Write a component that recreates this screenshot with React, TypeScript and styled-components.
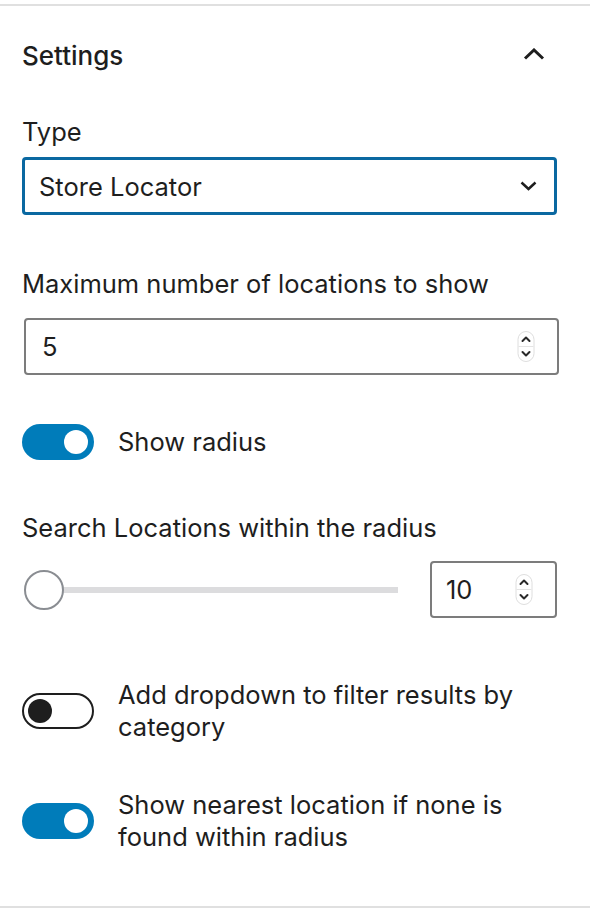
import React from "react";
import styled, { createGlobalStyle } from "styled-components";

const Global = createGlobalStyle`
  html, body { margin: 0; padding: 0; background: #fff; }
  body {
    font-family: Inter, "Noto Sans", "Liberation Sans", sans-serif;
    color: #1e1e1e;
    -webkit-font-smoothing: antialiased;
  }
  * { box-sizing: border-box; }
`;

const Page = styled.div`
  width: 590px;
  height: 910px;
  padding-top: 4px;
  background: #fff;
`;

const Panel = styled.section`
  border-top: 2px solid #e0e0e0;
  border-bottom: 2px solid #e0e0e0;
  padding: 0 33px 53px 22px;
`;

const Header = styled.div`
  height: 100px;
  display: flex;
  align-items: center;
  justify-content: space-between;
`;

const Title = styled.h2`
  margin: 0;
  font-size: 26px;
  line-height: 32px;
  font-weight: 500;
  color: #1e1e1e;
`;

const HeaderIcon = styled.svg`
  width: 22px;
  height: 12px;
  margin-right: 12px;
  margin-top: -4px;
`;

const Block = styled.div<{ $mt: number }>`
  margin-top: ${(p) => p.$mt}px;
`;

const Label = styled.div`
  font-size: 25.5px;
  line-height: 32px;
  color: #1e1e1e;
`;

const Select = styled.div`
  margin-top: 9px;
  height: 58px;
  border: 3px solid #0a68a1;
  border-radius: 4px;
  display: flex;
  align-items: center;
  justify-content: space-between;
  padding: 0 17px 0 14px;
  font-size: 25.5px;
`;

const NumberBox = styled.div<{ $width?: number }>`
  height: 57px;
  width: ${(p) => (p.$width ? `${p.$width}px` : "auto")};
  border: 2px solid #7c7c7c;
  border-radius: 4px;
  display: flex;
  align-items: center;
  justify-content: space-between;
  padding: 0 22px 0 14px;
  font-size: 25.5px;
  flex-shrink: 0;
`;

const WideNumber = styled(NumberBox)`
  margin: 18px -2px 0 2px;
  padding-left: 16px;
`;

const Spinner = styled.svg`
  width: 18px;
  height: 31px;
  display: block;
`;

const ToggleRow = styled.div`
  display: flex;
  align-items: center;
  gap: 24px;
`;

const Track = styled.div<{ $on: boolean }>`
  width: 72px;
  height: 36px;
  border-radius: 18px;
  flex-shrink: 0;
  display: flex;
  align-items: center;
  justify-content: ${(p) => (p.$on ? "flex-end" : "flex-start")};
  padding: ${(p) => (p.$on ? "0 6px" : "0 4px")};
  background: ${(p) => (p.$on ? "#007cba" : "#fff")};
  border: ${(p) => (p.$on ? "none" : "2px solid #1e1e1e")};
`;

const Knob = styled.div<{ $on: boolean }>`
  width: 24px;
  height: 24px;
  border-radius: 50%;
  background: ${(p) => (p.$on ? "#fff" : "#1e1e1e")};
`;

const ToggleText = styled.div`
  font-size: 25.5px;
  line-height: 32px;
  color: #1e1e1e;
`;

const RangeRow = styled.div`
  margin-top: 17px;
  display: flex;
  align-items: center;
  gap: 32px;
`;

const Range = styled.div`
  flex: 1;
  height: 40px;
  position: relative;
  display: flex;
  align-items: center;
`;

const RangeTrack = styled.div`
  margin-left: 22px;
  flex: 1;
  height: 6px;
  background: #dcdcde;
`;

const Thumb = styled.div`
  position: absolute;
  left: 2px;
  top: 0;
  width: 40px;
  height: 40px;
  border-radius: 50%;
  border: 2px solid #8a8d92;
  background: #fff;
`;

const SpinnerIcon = () => (
  <Spinner viewBox="0 0 18 31">
    <rect x="1" y="0.5" width="16" height="30" rx="8" fill="#fff" stroke="#dedede" />
    <line x1="1.5" y1="15.5" x2="16.5" y2="15.5" stroke="#e4e4e4" />
    <path d="M5.5 10 L9 6.5 L12.5 10" fill="none" stroke="#2a2a2a" strokeWidth="2" strokeLinecap="round" strokeLinejoin="round" />
    <path d="M5.5 21 L9 24.5 L12.5 21" fill="none" stroke="#2a2a2a" strokeWidth="2" strokeLinecap="round" strokeLinejoin="round" />
  </Spinner>
);

const Toggle = ({ on }: { on: boolean }) => (
  <Track $on={on}>
    <Knob $on={on} />
  </Track>
);

export default function App() {
  return (
    <>
      <Global />
      <Page>
        <Panel>
          <Header>
            <Title>Settings</Title>
            <HeaderIcon viewBox="0 0 22 12">
              <path d="M2 10.5 L11 2 L20 10.5" fill="none" stroke="#1e1e1e" strokeWidth="3" />
            </HeaderIcon>
          </Header>

          <Block $mt={10}>
            <Label>Type</Label>
            <Select>
              <span>Store Locator</span>
              <svg width="17" height="10" viewBox="0 0 17 10">
                <path d="M1.5 1.5 L8.5 8 L15.5 1.5" fill="none" stroke="#1e1e1e" strokeWidth="2.5" />
              </svg>
            </Select>
          </Block>

          <Block $mt={53}>
            <Label>Maximum number of locations to show</Label>
            <WideNumber>
              <span>5</span>
              <SpinnerIcon />
            </WideNumber>
          </Block>

          <Block $mt={49}>
            <ToggleRow>
              <Toggle on />
              <ToggleText>Show radius</ToggleText>
            </ToggleRow>
          </Block>

          <Block $mt={52}>
            <Label>Search Locations within the radius</Label>
            <RangeRow>
              <Range>
                <Thumb />
                <RangeTrack />
              </Range>
              <NumberBox $width={127}>
                <span>10</span>
                <SpinnerIcon />
              </NumberBox>
            </RangeRow>
          </Block>

          <Block $mt={61}>
            <ToggleRow>
              <Toggle on={false} />
              <ToggleText>Add dropdown to filter results by category</ToggleText>
            </ToggleRow>
          </Block>

          <Block $mt={46}>
            <ToggleRow>
              <Toggle on />
              <ToggleText>Show nearest location if none is found within radius</ToggleText>
            </ToggleRow>
          </Block>
        </Panel>
      </Page>
    </>
  );
}
